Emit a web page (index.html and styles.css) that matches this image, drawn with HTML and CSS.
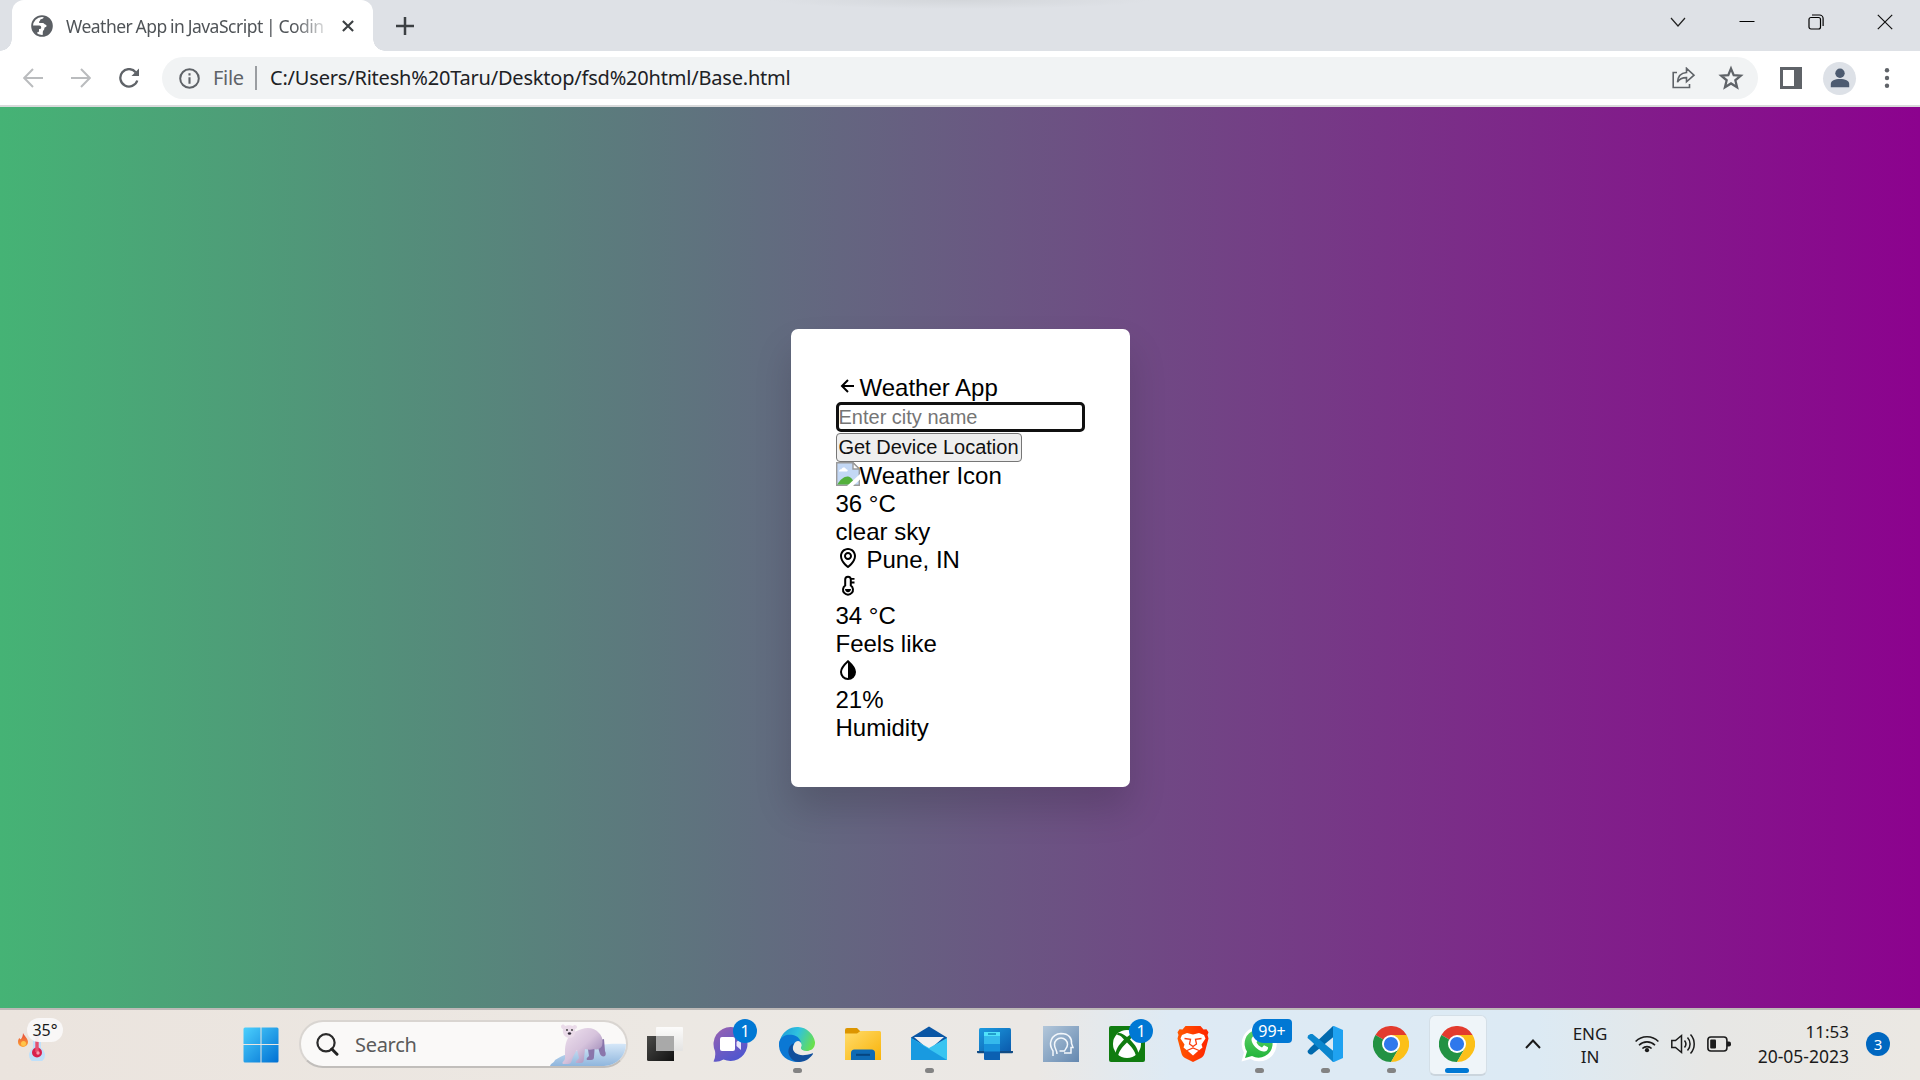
FILE: index.html
```html
<!DOCTYPE html>
<html lang="en">
<head>
<meta charset="utf-8">
<title>Weather App in JavaScript</title>
<link rel="stylesheet" href="styles.css">
</head>
<body>
<svg class="defs" width="0" height="0" aria-hidden="true">
  <defs>
    <linearGradient id="win" x1="0" y1="0" x2="1" y2="1"><stop offset="0" stop-color="#4cd0fd"/><stop offset="1" stop-color="#0070d3"/></linearGradient>
    <linearGradient id="chat" x1="0" y1="0" x2=".6" y2="1"><stop offset="0" stop-color="#9a62b0"/><stop offset="1" stop-color="#4f56cf"/></linearGradient>
    <linearGradient id="edgeTop" x1="0" y1=".3" x2="1" y2=".6"><stop offset="0" stop-color="#1f9fd8"/><stop offset=".45" stop-color="#2fc2df"/><stop offset="1" stop-color="#6be04a"/></linearGradient>
    <linearGradient id="folder" x1="0" y1="0" x2="1" y2="1"><stop offset="0" stop-color="#ffdc6b"/><stop offset="1" stop-color="#f9b208"/></linearGradient>
    <linearGradient id="deep" x1="0" y1="0" x2="1" y2="1"><stop offset="0" stop-color="#1c9be0"/><stop offset="1" stop-color="#0b5bad"/></linearGradient>
    <linearGradient id="dark" x1="0" y1="0" x2="1" y2="1"><stop offset="0" stop-color="#4a4a48"/><stop offset="1" stop-color="#111"/></linearGradient>
    <linearGradient id="glass" x1="0" y1="0" x2="0" y2="1"><stop offset="0" stop-color="#fff"/><stop offset="1" stop-color="#e2e2e2"/></linearGradient>
    <linearGradient id="head" x1="0" y1="0" x2="1" y2="1"><stop offset="0" stop-color="#b3c7da"/><stop offset="1" stop-color="#6488b0"/></linearGradient>
    <linearGradient id="brave" x1="0" y1="0" x2="1" y2="0"><stop offset="0" stop-color="#ff5a00"/><stop offset="1" stop-color="#ff2400"/></linearGradient>
    <linearGradient id="wa" x1="0" y1="0" x2="0" y2="1"><stop offset="0" stop-color="#5fd267"/><stop offset="1" stop-color="#22b43b"/></linearGradient>
    <linearGradient id="ice" x1="0" y1="0" x2="0" y2="1"><stop offset="0" stop-color="#d5e7f8"/><stop offset="1" stop-color="#8fb6dd"/></linearGradient>
    <linearGradient id="bear" x1="0" y1="0" x2="1" y2="1"><stop offset="0" stop-color="#f0e3ef"/><stop offset=".5" stop-color="#d6c3dc"/><stop offset="1" stop-color="#8a74ab"/></linearGradient>
    <linearGradient id="flame" x1="0" y1="0" x2="0" y2="1"><stop offset="0" stop-color="#e5483c"/><stop offset="1" stop-color="#ffa530"/></linearGradient>
    <symbol id="chrome" viewBox="0 0 36 36">
      <path d="M18 18L2.4 9A18 18 0 0 1 33.6 9z" fill="#e33b2e"/>
      <path d="M18 18L2.4 9A18 18 0 0 0 18 36L25.8 22.5z" fill="#229243"/>
      <path d="M18 9H33.6A18 18 0 0 1 18 36L25.8 22.5z" fill="#fcc018"/>
      <circle cx="18" cy="18" r="9" fill="#fff"/><circle cx="18" cy="18" r="7.1" fill="#2f78ec"/>
    </symbol>
  </defs>
</svg>

<header class="tabstrip">
  <div class="tab">
    <svg class="globe" viewBox="0 0 22 22"><circle cx="11" cy="11" r="9.9" fill="none" stroke="#5b5f64" stroke-width="1.8"/><path d="M13 1.500c-.3 2-1.500 2.600-3.200 2.700-.7 0-.4 1.500-1.300 2.100-.8.6-.7 1.600.2 1.700H12c1 0 1.400 1.400 2.300 1.500 1.500.2 1.700 2.200.5 2.400-1 .2-1.500.5-1.500 1.800 0 1.600-1.500 1.500-1.500 3.300v3.500c5-.4 9.300-4 9.300-9.500S17.500 2 13 1.500z" fill="#5b5f64"/><path d="M1.200 10.500h7c1.300 0 2 .8 2 2.200 0 1.200-1 1.200-2.200 1.300v2c0 1-.6 1.300-1.800 1.300v1.500C3 17 .9 14 1.200 10.500z" fill="#5b5f64"/></svg>
    <span class="tab-title">Weather App in JavaScript | Codin</span>
    <svg class="tab-close" viewBox="0 0 12 12"><path d="M.9.9l10.200 10.200M11.100.9L.9 11.100" stroke="#3c4043" stroke-width="2.100"/></svg>
  </div>
  <svg class="plus" viewBox="0 0 18 18"><path d="M9 0v18M0 9h18" stroke="#3c4043" stroke-width="2.500"/></svg>
  <div class="window-buttons">
    <svg viewBox="0 0 16 16"><path d="M1 4l7 8 7-8" fill="none" stroke="#222" stroke-width="1.200"/></svg>
    <svg viewBox="0 0 16 16"><path d="M.5 7.500h15" stroke="#000" stroke-width="1"/></svg>
    <svg viewBox="0 0 16 16"><rect x="1" y="3.500" width="11.500" height="11.500" rx="2" fill="none" stroke="#000" stroke-width="1.200"/><path d="M4 1h7.500a3.600 3.600 0 0 1 3.600 3.600V12" fill="none" stroke="#000" stroke-width="1.200"/></svg>
    <svg viewBox="0 0 16 16"><path d="M.8.8l14.400 14.400M15.200.8L.8 15.200" stroke="#111" stroke-width="1.200"/></svg>
  </div>
</header>

<nav class="toolbar">
  <svg class="nav-icon dim" viewBox="0 0 20 20"><path d="M20 10H1.500M10 1L1.200 10 10 19" fill="none" stroke="currentColor" stroke-width="2"/></svg>
  <svg class="nav-icon dim" viewBox="0 0 20 20"><path d="M0 10h18.500M10 1l8.800 9L10 19" fill="none" stroke="currentColor" stroke-width="2"/></svg>
  <svg class="nav-icon" viewBox="0 0 20 20"><path d="M16.700 4.200A8.700 8.700 0 1 0 18.300 12.500" fill="none" stroke="currentColor" stroke-width="2.300"/><path d="M20 .5V8h-7.500z" fill="currentColor"/></svg>
  <div class="address">
    <svg class="info" viewBox="0 0 21 21"><circle cx="10.500" cy="10.500" r="9.300" fill="none" stroke="#5f6368" stroke-width="2"/><path d="M10.500 9.300v6.400M10.500 5.200v2.200" stroke="#5f6368" stroke-width="2.100"/></svg>
    <span class="scheme">File</span>
    <span class="divider"></span>
    <span class="url">C:/Users/Ritesh%20Taru/Desktop/fsd%20html/Base.html</span>
    <svg class="share" viewBox="0 0 24 22"><path d="M5 5.500H1.200V20.500H17.500V17M14.500 5.500V1.300L22 8.200l-7.500 6.600v-4.200C9.500 10.600 7 12.500 5.500 15.200 5.800 10 8.500 6 14.500 5.500z" fill="none" stroke="#5f6368" stroke-width="1.600"/></svg>
    <svg class="star" viewBox="0 0 24 24"><path d="M12 3.300l2.500 6.100 6.500.5-5 4.200 1.600 6.400-5.600-3.500-5.600 3.500L8 14.100l-5-4.200 6.500-.5z" fill="none" stroke="#5f6368" stroke-width="2.100"/></svg>
  </div>
  <svg class="panel" viewBox="0 0 22 22"><rect width="22" height="22" fill="#5f6368"/><rect x="3" y="3" width="11" height="16" fill="#fff"/></svg>
  <span class="avatar"><svg viewBox="0 0 20 20"><circle cx="10" cy="5.300" r="4.700" fill="#4d5b70"/><path d="M.8 19.200V16c0-3.500 4-5 9.200-5s9.200 1.500 9.200 5v3.200z" fill="#4d5b70"/></svg></span>
  <svg class="dots" viewBox="0 0 6 22"><circle cx="3" cy="3.200" r="2.200"/><circle cx="3" cy="11" r="2.200"/><circle cx="3" cy="18.800" r="2.200"/></svg>
</nav>

<main class="page">
  <section class="card">
    <div class="row"><svg class="bx" viewBox="0 0 24 24"><path d="M12.707 17.293 8.414 13H18v-2H8.414l4.293-4.293-1.414-1.414L4.586 12l6.707 6.707z"/></svg>Weather App</div>
    <input class="city" type="text" placeholder="Enter city name">
    <button class="locate">Get Device Location</button>
    <div class="row"><svg class="bx" viewBox="0 0 24 24"><path d="M.7.7H17l6.300 6.300v16.300H.7z" fill="#c3d8f5" stroke="#9a9a9a" stroke-width="1.400"/><path d="M3 9.500c0-2 2-2.200 2.500-2.200.5-2.500 4-2.500 4.600 0 1.800 0 2.300 2.200.7 2.200z" fill="#fff"/><path d="M1.400 22.600C4 17 9 14 12 14.500s5 3 7 8.100z" fill="#53b03c"/><path d="M24 12L11 24h6l7-6.500z" fill="#fff"/><path d="M17 .7V7h6.300z" fill="#fff" stroke="#9a9a9a" stroke-width="1.400"/></svg>Weather Icon</div>
    <div class="row">36 °C</div>
    <div class="row">clear sky</div>
    <div class="row spaced"><svg class="bx" viewBox="0 0 24 24"><path d="M12 14c2.206 0 4-1.794 4-4s-1.794-4-4-4-4 1.794-4 4 1.794 4 4 4zm0-6c1.103 0 2 .897 2 2s-.897 2-2 2-2-.897-2-2 .897-2 2-2z"/><path d="M11.420 21.814a.998.998 0 0 0 1.160 0C12.884 21.599 20.029 16.440 20 10c0-4.411-3.589-8-8-8S4 5.589 4 9.995c-.029 6.445 7.116 11.604 7.420 11.819zM12 4c3.309 0 6 2.691 6 6 .021 4.438-4.388 8.423-6 9.730-1.611-1.308-6.021-5.294-6-9.735 0-3.304 2.691-5.995 6-5.995z"/></svg>Pune, IN</div>
    <div class="row"><svg class="bx" viewBox="0 0 24 24"><path d="M9.200 11.500V5.600a2.800 2.800 0 0 1 5.600 0v5.900a5 5 0 1 1-5.600 0z" fill="none" stroke="#000" stroke-width="2"/><path d="M9 15h6c0 2-1.300 3.200-3 3.200S9 17 9 15z"/><path d="M14.500 4.800h4M14.500 8.500h4" stroke="#000" stroke-width="1.800"/></svg></div>
    <div class="row">34 °C</div>
    <div class="row">Feels like</div>
    <div class="row"><svg class="bx" viewBox="0 0 24 24"><path d="M12 3.300C8 6.900 5 10.300 5 14a7 7 0 0 0 14 0c0-3.700-3-7.100-7-10.700z" fill="none" stroke="#000" stroke-width="2"/><path d="M12 3.300C16 6.900 19 10.300 19 14a7 7 0 0 1-7 7z"/></svg></div>
    <div class="row">21%</div>
    <div class="row">Humidity</div>
  </section>
</main>

<footer class="taskbar">
  <div class="widget">
    <svg class="flame" viewBox="0 0 10 14"><path d="M5 0c1 2.500 5 5.500 5 9a5 5 0 0 1-10 0c0-2 .8-3.500 1.500-4 .2 1 .8 1.300 1.200 1.300C4 5 5 3 5 0z" fill="url(#flame)"/><circle cx="5.500" cy="10.500" r="2.500" fill="#ffc54a"/></svg>
    <svg class="thermo" viewBox="0 0 18 30"><path d="M5 17V4a4 4 0 0 1 8 0v13a8 8 0 1 1-8 0z" fill="#bfe0fa"/><circle cx="9" cy="21.500" r="5" fill="#d9204c"/><path d="M9 21V5" stroke="#e5506d" stroke-width="3.400"/><circle cx="10" cy="22" r="1.700" fill="#f79bb0"/></svg>
    <span class="temp">35°</span>
  </div>
  <div class="app start"><svg viewBox="0 0 36 36"><path d="M2 .5h15.500v16.500H.5V2A1.500 1.500 0 0 1 2 .5zM18.500.5H34A1.500 1.500 0 0 1 35.500 2v15h-17zM.5 18h17v17.500H2A1.500 1.500 0 0 1 .5 34zM18.500 18h17v16a1.500 1.500 0 0 1-1.500 1.500H18.500z" fill="url(#win)"/></svg></div>
  <div class="search">
    <svg class="lens" viewBox="0 0 23 23"><circle cx="10" cy="9.800" r="8.600" fill="none" stroke="#2b2b2b" stroke-width="2.200"/><path d="M15.800 16l5.200 5.200" stroke="#222" stroke-width="3" stroke-linecap="round"/></svg>
    <span>Search</span>
    <svg class="bear" viewBox="0 0 76 43">
      <path d="M0 43c1-3 4-3 5-6 8-5 16-8 24-10 12-4 26-7 47-6v22z" fill="url(#ice)"/>
      <path d="M37 20h8l-1 14c0 2-1 3-3 3h-4c-1-2 1-3 2-4zM46 18l8-2 1 12c1 2 1 4 0 5-2 1-4 0-5-2z" fill="#8a76ab"/>
      <path d="M20 12c4-3 8-5 12-6 6-2 13-1 17 4 4 4 4 9 3 13-2 3-5 4-8 3-3 1-6 1-9 0l-1 9c0 3-1 5-3 5h-5c-1-2 2-3 3-5l-2-8c-2 3-4 6-5 10-1 3-2 4-4 4h-5c-2-2 2-3 2-6 0-8-1-15 5-23z" fill="url(#bear)"/>
      <path d="M11 3c1-2 3-2 4 0 2-1 6-1 8 0 1-2 4-1 4 1 0 1-1 2-2 2 1 5-1 9-5 9s-8-3-7-9c-1 0-2-1-2-3z" fill="#eadbe9"/>
      <circle cx="17" cy="7" r=".9" fill="#333"/><circle cx="22" cy="7" r=".9" fill="#333"/><ellipse cx="19.500" cy="10.500" rx="1.700" ry="1.300" fill="#332c3a"/>
    </svg>
  </div>
  <div class="app"><svg viewBox="0 0 36 36"><path d="M0 10h27v25H1.500A1.500 1.500 0 0 1 0 33.500z" fill="url(#dark)"/><rect x="9" y="1" width="27" height="24" rx="1" fill="url(#glass)" opacity=".85"/><rect x="9" y="10" width="18" height="15" fill="#a9a9a9"/></svg></div>
  <div class="app"><svg viewBox="0 0 36 36"><path d="M18 1a17 17 0 1 1-7.500 32.500Q5 36.500.5 35.500 3 31 2 25A17 17 0 0 1 18 1z" fill="url(#chat)"/><rect x="7" y="11" width="15" height="14" rx="2" fill="#fff"/><path d="M23.500 16l4.500-4v12l-4.500-4z" fill="#e8e4fa"/></svg><span class="badge">1</span></div>
  <div class="app"><svg viewBox="0 0 36 36"><path d="M1 14A18 18 0 0 1 36 16c.3 6-4 9-8.500 9-4 0-6-1.500-5.500-3.500 1-3 0-8-6-8-6 0-11 2-15 .5z" fill="url(#edgeTop)"/><path d="M.2 15.500C3 9 9 8 14 9c5 1 8.500 5 8 10-5-5-11 1-7 9 2 4 5 6 8 7.500C10 38-2 29 .2 15.500z" fill="#0b78d4"/><path d="M14 19c-2 8 6 13 19 8.500 1-.4 1.200.2.7 1C29 35 22 37 16.500 35.500 7 30.500 7.500 20 15 17z" fill="#114f9c"/><path d="M15 18c2-4 7-4 7.500 1 0 2-1.500 2.500-.8 4 2 3 8 3 12 .5-3 5-11 6-15.700 2.500-3-2-4-5-3-8z" fill="#edeae6"/></svg><i class="run"></i></div>
  <div class="app"><svg viewBox="0 0 36 36"><path d="M0 4a2 2 0 0 1 2-2h10l3.500 3.500V10H0z" fill="#dc9500"/><path d="M0 7.500h12L15.500 5H34.500A1.500 1.500 0 0 1 36 6.500V34H0z" fill="url(#folder)"/><path d="M6 34v-7a3.500 3.500 0 0 1 3.500-3.500h17A3.500 3.500 0 0 1 30 27v7z" fill="#0e6ab4"/><path d="M11 28.800h14" stroke="#06457f" stroke-width="2"/></svg></div>
  <div class="app"><svg viewBox="0 0 36 36"><path d="M0 11.500L18 .5l18 11V16L18 27 0 16z" fill="#0a56a5"/><path d="M3 11h30L18 24z" fill="#f1f0f0"/><path d="M0 12l18 10L36 12v22H0z" fill="#39c4f1"/><path d="M0 12l36 22H0z" fill="#199ae0"/></svg><i class="run"></i></div>
  <div class="app"><svg viewBox="0 0 36 36"><path d="M3.500 2h29A1.500 1.500 0 0 1 34 3.500V25H2V3.500A1.500 1.500 0 0 1 3.500 2z" fill="url(#deep)"/><path d="M0 25h36v1.200a1 1 0 0 1-1 1H1a1 1 0 0 1-1-1z" fill="#114b84"/><path d="M7 7h16v27H8a1 1 0 0 1-1-1z" fill="#0b60b2"/><path d="M7 7h16v18.500H7z" fill="#1791db"/><path d="M7 7h16v11H7z" fill="#34b9ec"/><path d="M7 6h16v4H7z" fill="#50e2fa"/><path d="M11 8h8" stroke="#1389bd" stroke-width="1.500"/></svg></div>
  <div class="app"><svg viewBox="0 0 36 36"><rect width="36" height="36" fill="url(#head)"/><path d="M10 30v-5C5 18 8 8 18 7.500c8 0 11 5 10.500 10l1.500 4h-2v5.500h-7" fill="none" stroke="#f3f7fb" stroke-width="1.500"/><path d="M14 28c0-4-2.500-5.500-2.500-9.500a6.500 6.500 0 0 1 13 0c0 3-2 4-3 6.500h-5" fill="none" stroke="#f3f7fb" stroke-width="1.500"/></svg></div>
  <div class="app"><svg viewBox="0 0 36 36"><rect width="36" height="36" rx="2" fill="#107c10"/><circle cx="18" cy="18" r="14" fill="#fff"/><path d="M9 7c3-.5 6 1.500 9 4 3-2.500 6-4.500 9-4l1 2c-3-.5-5 2-7 4.500 5 5 9 11 8 14.500l-2 2c-1-5-5-10-9-13.500C14 20 10 25 9 30l-2-2c-1-3.500 3-9.500 8-14.500C13 11 11 8.500 8 9z" fill="#107c10"/></svg><span class="badge">1</span></div>
  <div class="app"><svg viewBox="0 0 36 36"><path d="M10.500 0h15l3 3.500 3-.2 2 3-1 2.700 1 3.500-4 15c-.6 2-2 3.500-3.500 4.500l-8 4-8-4C8.500 31 7 29.500 6.500 27.500l-4-15 1-3.500-1-2.700 2-3 3 .2z" fill="url(#brave)"/><path d="M7 9l5-2 6 1.500L24 7l5 2 1.500 3.500-4 6 1 3-5 4-4.500 4-4.500-4-5-4 1-3-4-6z" fill="#fff"/><path d="M9.500 12.500l6 .8-1 4.700 3.500 2.500 3.500-2.500-1-4.700 6-.8M12 24.500l6-2.500 6 2.500" fill="none" stroke="#fb3b0b" stroke-width="1.300"/></svg></div>
  <div class="app"><svg viewBox="0 0 36 36"><path d="M.5 35.500L3 26.500A17.500 17.500 0 1 1 9.500 33z" fill="#fff"/><path d="M4 32l2-6.500A14 14 0 1 1 11 30z" fill="url(#wa)"/><path d="M13 10l2.500 0 1.500 4-1.500 2.200c1.200 2.600 3 4.200 5.500 5.200l2-2.200 4 2c.3 3-2 4.500-4.500 4.300C16 24.500 11 18.500 10.500 14c0-2 1-3.500 2.500-4z" fill="#fff"/></svg><span class="badge wide">99+</span><i class="run"></i></div>
  <div class="app"><svg viewBox="0 0 36 36"><path d="M26 0l-22.500 21.500-3 3.500.5 2 2 1.500h2L27 10.500z" fill="#0069ad"/><path d="M26 36L3.500 14.500.5 12l.5-2.500L3.500 8h2L27 25.500z" fill="#0b86ce"/><path d="M26 0h1l9 4v28l-9 4h-1z" fill="#1fa2f1"/></svg><i class="run"></i></div>
  <div class="app"><svg viewBox="0 0 36 36"><use href="#chrome"/></svg><i class="run"></i></div>
  <div class="app active"><svg viewBox="0 0 36 36"><use href="#chrome"/></svg><i class="run"></i></div>

  <svg class="chevron" viewBox="0 0 16 10"><path d="M1 9l7-7.500L15 9" fill="none" stroke="#1b1b1b" stroke-width="2"/></svg>
  <div class="lang"><span>ENG</span><span>IN</span></div>
  <div class="status">
    <svg viewBox="0 0 24 24"><g fill="none" stroke="#1b1b1b" stroke-width="1.600"><path d="M.6 9.500a16 16 0 0 1 22.800 0M4 13.200a11.300 11.300 0 0 1 16 0M7.400 16.500a6.600 6.600 0 0 1 9.200 0"/></g><circle cx="12" cy="18.200" r="2.100" fill="#1b1b1b"/></svg>
    <svg viewBox="0 0 24 24"><g fill="none" stroke="#1b1b1b" stroke-width="1.500"><path d="M.8 8.500h3.700l6-5v17l-6-5H.8z"/><path d="M13.500 8.500a5.500 5.500 0 0 1 0 7M16.500 5.500a9.500 9.500 0 0 1 0 13M19.500 2.500a14 14 0 0 1 0 19"/></g></svg>
    <svg viewBox="0 0 24 24"><rect x=".9" y="5" width="19" height="14" rx="3" fill="none" stroke="#1b1b1b" stroke-width="1.600"/><rect x="3.200" y="7.500" width="5.800" height="9" rx="1" fill="#1b1b1b"/><path d="M20 9.500h2a2 2 0 0 1 2 2v1a2 2 0 0 1-2 2h-2z" fill="#1b1b1b"/></svg>
  </div>
  <div class="clock"><span>11:53</span><span class="date">20-05-2023</span></div>
  <span class="count">3</span>
</footer>
</body>
</html>
```
FILE: styles.css
```css
* { box-sizing: border-box; }

body {
  margin: 0;
  width: 1920px;
  height: 1080px;
  overflow: hidden;
  display: flex;
  flex-direction: column;
  font-family: "Noto Sans", "Open Sans", sans-serif;
}

svg { display: block; flex: none; }
.defs { position: absolute; }

/* Tab strip */
.tabstrip {
  height: 51px;
  flex: none;
  display: flex;
  background: radial-gradient(ellipse 190px 9px at 960px 0, #d3d6da, #dee1e6);
  padding-left: 12px;
}
.tab {
  position: relative;
  width: 361px;
  height: 51px;
  display: flex;
  align-items: center;
  padding-left: 19px;
  background: #fff;
  border-radius: 12px 12px 0 0;
}
.tab::before,
.tab::after {
  content: "";
  position: absolute;
  bottom: 0;
  width: 12px;
  height: 12px;
}
.tab::before { left: -12px; background: radial-gradient(circle at 0 0, transparent 11.5px, #fff 12px); }
.tab::after { right: -12px; background: radial-gradient(circle at 100% 0, transparent 11.5px, #fff 12px); }
.globe { width: 22px; height: 22px; }
.tab-title {
  width: 264px;
  margin-left: 13px;
  white-space: nowrap;
  font-size: 17.5px;
  letter-spacing: -.5px;
  word-spacing: -.8px;
  color: #505458;
  -webkit-mask-image: linear-gradient(to right, #000 228px, transparent 266px);
  mask-image: linear-gradient(to right, #000 228px, transparent 266px);
}
.tab-close { width: 12px; height: 12px; margin-left: 12px; }
.plus { width: 18px; height: 18px; margin: 17px 0 0 23px; }
.window-buttons { margin: 14px 27px 0 auto; display: flex; gap: 53px; }
.window-buttons svg { width: 16px; height: 16px; }

/* Toolbar */
.toolbar {
  height: 56px;
  flex: none;
  display: flex;
  align-items: center;
  padding: 0 30px 0 23px;
  background: #fff;
  border-bottom: 2px solid #d9dadb;
}
.nav-icon { width: 20px; height: 20px; margin-right: 28px; color: #5f6368; }
.dim { color: #babcbe; }
.nav-icon:nth-child(3) { margin-right: 23px; }
.address {
  width: 1596px;
  height: 42px;
  display: flex;
  align-items: center;
  padding: 0 14px 0 17px;
  border-radius: 21px;
  background: #f1f3f4;
  font-size: 20px;
  line-height: 42px;
}
.info { width: 21px; height: 21px; }
.scheme { width: 42px; margin-left: 13px; color: #5f6368; letter-spacing: -.3px; }
.divider { width: 2px; height: 24px; background: #9a9da1; }
.url { margin-left: 13px; color: #202124; letter-spacing: -.2px; white-space: nowrap; }
.share { width: 24px; height: 22px; margin-left: auto; }
.star { width: 26px; height: 26px; margin-left: 22px; }
.panel { width: 22px; height: 22px; margin-left: 22px; }
.avatar {
  width: 33px;
  height: 33px;
  margin-left: 21px;
  display: grid;
  place-items: center;
  border-radius: 50%;
  background: #dde1e7;
}
.avatar svg { width: 20px; height: 20px; }
.dots { width: 6px; height: 22px; margin-left: auto; fill: #5f6368; }

/* Page */
.page {
  height: 901px;
  flex: none;
  display: flex;
  align-items: center;
  justify-content: center;
  background: linear-gradient(to right, #45b375, #8c028e);
  font-family: "Liberation Sans", Arial, sans-serif;
}
.card {
  width: 339px;
  height: 458px;
  padding: 45px;
  background: #fff;
  border-radius: 7px;
  box-shadow: 0 22px 37px rgba(0, 0, 0, .15);
  color: #000;
}
.row {
  height: 28px;
  display: flex;
  align-items: flex-start;
  font-size: 24px;
  line-height: 28px;
  white-space: nowrap;
}
.spaced { gap: 7px; }
.bx { width: 24px; height: 24px; }
.city {
  display: block;
  width: 249px;
  height: 30px;
  margin-bottom: 1px;
  padding: 1px 0 0;
  border: 3px solid #101010;
  border-radius: 5px;
  outline: none;
  background: #fff;
  font: 20px "Liberation Sans", Arial, sans-serif;
}
.city::placeholder { color: #757575; }
.locate {
  display: block;
  width: 186px;
  height: 29px;
  padding: 0;
  border: 1px solid #767676;
  border-radius: 4px;
  background: #efefef;
  color: #111;
  font: 20px/26px "Liberation Sans", Arial, sans-serif;
}

/* Taskbar */
.taskbar {
  height: 72px;
  flex: none;
  display: flex;
  align-items: center;
  border-top: 2px solid #bdb9b7;
  background: linear-gradient(to right, #ebe4de, #ece8e3 35%, #ebe8e5 54%, #deeaf4 61%, #dceaf4 80%, #e7e7e5 89%, #ebe8e3);
  color: #1b1b1b;
}
.widget { position: relative; width: 228px; height: 70px; }
.flame { position: absolute; left: 18px; top: 23px; width: 10px; height: 14px; }
.thermo { position: absolute; left: 28px; top: 21px; width: 18px; height: 30px; }
.temp {
  position: absolute;
  left: 27px;
  top: 8px;
  width: 36px;
  height: 24px;
  border-radius: 12px;
  background: rgba(250, 249, 248, .92);
  font-size: 16px;
  line-height: 24px;
  text-align: center;
}
.app {
  position: relative;
  width: 66px;
  height: 70px;
  flex: none;
  display: grid;
  place-items: center;
}
.app svg { position: relative; width: 36px; height: 36px; top: -1px; }
.app.start svg { top: 0; }
.search {
  width: 329px;
  height: 48px;
  flex: none;
  margin: -2px 4px 0 5px;
  display: flex;
  align-items: center;
  padding-left: 15px;
  border: 2px solid #d9d5d1;
  border-bottom-color: #c1bebb;
  border-radius: 24px;
  background: #faf9f8;
  font-size: 20px;
  color: #5b5b5b;
  overflow: hidden;
}
.lens { width: 23px; height: 23px; }
.search span { margin-left: 16px; letter-spacing: -.3px; }
.bear { width: 76px; height: 43px; margin-left: auto; }
.badge {
  position: absolute;
  left: 35px;
  top: 9px;
  min-width: 24px;
  height: 24px;
  border-radius: 12px;
  background: #0078d4;
  color: #fff;
  font-size: 16px;
  line-height: 24px;
  text-align: center;
}
.badge.wide { left: 26px; width: 40px; border-radius: 12px 4px 4px 12px; }
.run {
  position: absolute;
  left: 29px;
  bottom: 7px;
  width: 9px;
  height: 5px;
  border-radius: 3px;
  background: #838383;
}
.active::before {
  content: "";
  position: absolute;
  left: 5px;
  top: 5px;
  width: 56px;
  height: 58px;
  border: 1px solid #d4dfe7;
  border-bottom: 2px solid #cbd5dd;
  border-radius: 6px;
  background: #eff5f9;
}
.active .run { left: 21px; width: 24px; background: #0078d4; }
.chevron { width: 16px; height: 10px; margin-left: 35px; margin-top: -2px; }
.lang {
  width: 44px;
  margin: -1px 0 0 27px;
  display: flex;
  flex-direction: column;
  align-items: center;
  font-size: 17px;
  line-height: 23px;
}
.status { display: flex; gap: 12px; margin: -2px 0 0 23px; }
.status svg { width: 24px; height: 24px; }
.clock {
  width: 118px;
  margin-top: -3px;
  display: flex;
  flex-direction: column;
  align-items: flex-end;
  font-size: 17px;
  line-height: 24px;
}
.date { font-size: 17.5px; }
.count {
  width: 24px;
  height: 24px;
  margin: -3px 0 0 17px;
  border-radius: 50%;
  background: #0067c0;
  color: #fff;
  font-size: 15px;
  line-height: 24px;
  text-align: center;
}
```
